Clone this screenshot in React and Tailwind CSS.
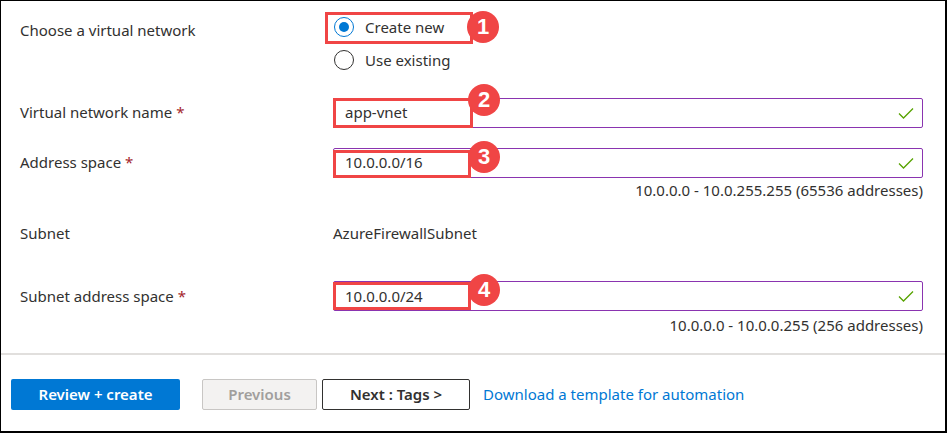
import React from "react";

const font = { fontFamily: '"Noto Sans", "Open Sans", sans-serif' };

function Check() {
  return (
    <svg width="16" height="12" viewBox="0 0 16 12" className="absolute right-[8px] top-1/2 -translate-y-1/2">
      <path d="M1 6.5 L5.5 11 L15 1.5" fill="none" stroke="#57a300" strokeWidth="1.3" />
    </svg>
  );
}

function Badge({ n, className }) {
  return (
    <div
      className={"absolute w-[32px] h-[32px] rounded-full bg-[#f04545] text-white flex items-center justify-center text-[22px] font-bold leading-none " + className}
      style={{ fontFamily: '"Liberation Sans", Arial, sans-serif' }}
    >
      {n}
    </div>
  );
}

function RedBox({ className }) {
  return <div className={"absolute border-[3px] border-[#f04545] pointer-events-none " + className} />;
}

function Input({ value }) {
  return (
    <div className="relative h-[30px] border border-[#8a34b0] rounded-[2px] flex items-center pl-[11px] text-[15px] text-[#323130]">
      {value}
      <Check />
    </div>
  );
}

function Req({ children }) {
  return (
    <span>
      {children} <span className="text-[#a4262c]">*</span>
    </span>
  );
}

export default function App() {
  return (
    <div
      className="w-[947px] h-[433px] bg-white border-l border-t border-r-2 border-b-2 border-black flex flex-col text-[#323130] text-[15px]"
      style={font}
    >
      {/* Row 1: radios */}
      <div className="flex h-[82px] pt-[19px]">
        <div className="w-[333px] pl-[19px] leading-[20px]">Choose a virtual network</div>
        <div className="relative flex flex-col gap-[13px] -mt-[3px]">
          <div className="flex items-center gap-[11px] h-[20px]">
            <div className="w-[20px] h-[20px] rounded-full border border-[#0078d4] flex items-center justify-center">
              <div className="w-[10px] h-[10px] rounded-full bg-[#0078d4]" />
            </div>
            <span>Create new</span>
          </div>
          <div className="flex items-center gap-[11px] h-[20px]">
            <div className="w-[20px] h-[20px] rounded-full border border-[#323130]" />
            <span>Use existing</span>
          </div>
          <RedBox className="left-[-9px] top-[-5px] w-[148px] h-[32px]" />
          <Badge n="1" className="left-[133px] top-[-6px]" />
        </div>
      </div>

      {/* Row 2 */}
      <div className="flex items-center h-[31px] mt-[14px]">
        <div className="w-[332px] pl-[19px]"><Req>Virtual network name</Req></div>
        <div className="relative w-[590px]">
          <Input value="app-vnet" />
          <RedBox className="left-0 top-0 w-[140px] h-[30px]" />
          <Badge n="2" className="left-[135px] top-[-14px]" />
        </div>
      </div>

      {/* Row 3 */}
      <div className="flex items-center h-[31px] mt-[19px]">
        <div className="w-[332px] pl-[19px]"><Req>Address space</Req></div>
        <div className="relative w-[590px]">
          <Input value="10.0.0.0/16" />
          <RedBox className="left-0 top-[2px] w-[138px] h-[28px]" />
          <Badge n="3" className="left-[135px] top-[-7px]" />
        </div>
      </div>
      <div className="flex justify-end w-[922px] h-[22px] items-center mt-[1px]">
        10.0.0.0 - 10.0.255.255 (65536 addresses)
      </div>

      {/* Subnet */}
      <div className="flex items-center h-[22px] mt-[21px]">
        <div className="w-[332px] pl-[19px]">Subnet</div>
        <div>AzureFirewallSubnet</div>
      </div>

      {/* Row 5 */}
      <div className="flex items-center h-[30px] mt-[37px]">
        <div className="w-[332px] pl-[19px]"><Req>Subnet address space</Req></div>
        <div className="relative w-[590px]">
          <Input value="10.0.0.0/24" />
          <RedBox className="left-0 top-[1px] w-[138px] h-[28px]" />
          <Badge n="4" className="left-[135px] top-[-7px]" />
        </div>
      </div>
      <div className="flex justify-end w-[922px] h-[22px] items-center mt-[3px]">
        10.0.0.0 - 10.0.0.255 (256 addresses)
      </div>

      {/* Divider */}
      <div className="mt-[17px] h-[2px] bg-[#e1dfdd] w-full" />

      {/* Buttons */}
      <div className="flex items-center mt-[24px] pl-[10px]">
        <button className="w-[169px] h-[31px] bg-[#0078d4] text-white font-semibold rounded-[2px] text-[15px]">
          Review + create
        </button>
        <button className="ml-[22px] w-[115px] h-[31px] bg-[#f3f2f1] border border-[#c8c6c4] text-[#a19f9d] font-semibold rounded-[2px] text-[15px]">
          Previous
        </button>
        <button className="ml-[5px] w-[148px] h-[31px] bg-white border border-[#323130] text-[#323130] font-semibold rounded-[2px] text-[15px]">
          Next : Tags &gt;
        </button>
        <span className="ml-[13px] text-[#0078d4]">Download a template for automation</span>
      </div>
    </div>
  );
}
